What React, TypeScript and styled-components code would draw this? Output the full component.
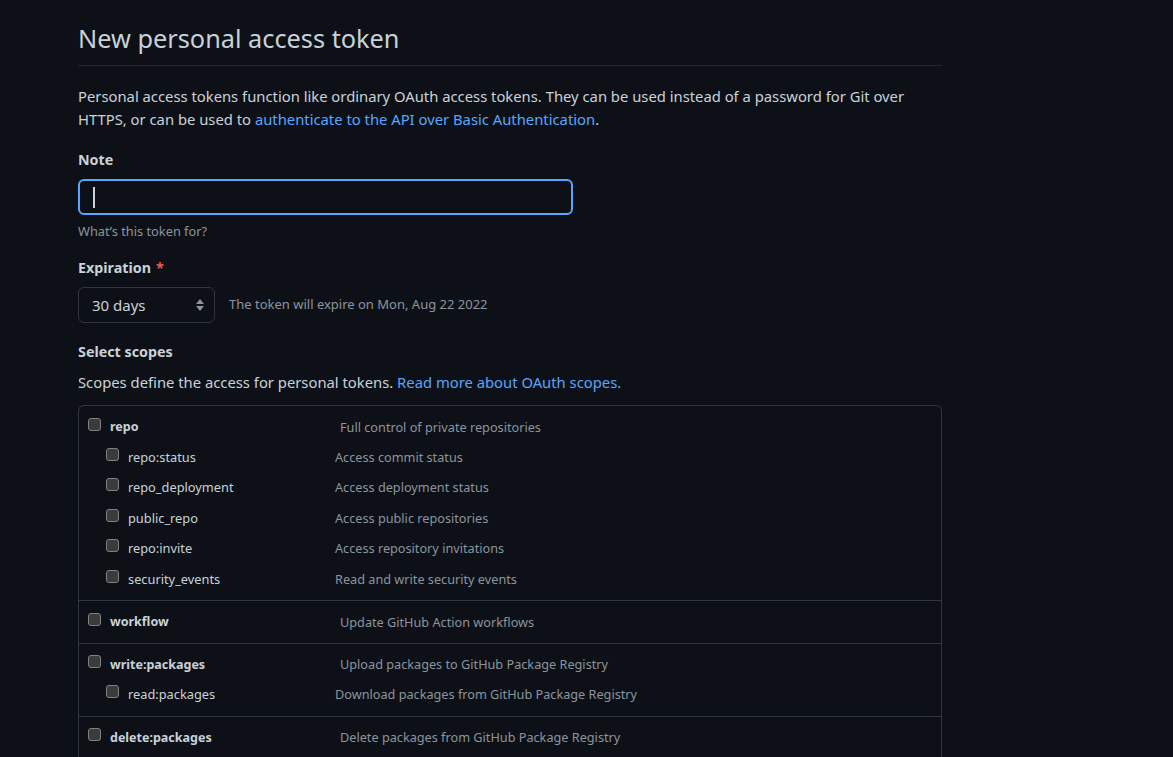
import React from "react";
import styled, { createGlobalStyle } from "styled-components";

const Global = createGlobalStyle`
  html, body { margin: 0; padding: 0; background: #0d1117; }
  body { font-family: "Noto Sans", "Liberation Sans", sans-serif; color: #c9d1d9; }
`;

const Page = styled.div`
  width: 864px;
  padding: 0 0 0 78px;
`;

const Header = styled.div`
  border-bottom: 1px solid #21262d;
  padding-top: 20px;
  padding-bottom: 9px;
`;

const Title = styled.h1`
  margin: 0;
  font-size: 25.3px;
  font-weight: 400;
  line-height: 36px;
  color: #c9d1d9;
`;

const Intro = styled.div`
  margin: 19px 0 0;
  font-size: 14.8px;
  line-height: 23px;
`;

const Line = styled.div`
  white-space: nowrap;
`;

const Link = styled.a`
  color: #58a6ff;
  text-decoration: none;
`;

const Label = styled.div<{ $top: number }>`
  margin-top: ${(p) => p.$top}px;
  font-size: 14.3px;
  font-weight: 700;
  line-height: 20px;
  color: #c9d1d9;
`;

const Req = styled.span`
  color: #f85149;
  margin-left: 5px;
`;

const Input = styled.div`
  margin-top: 9px;
  box-sizing: border-box;
  width: 495px;
  height: 36px;
  border: 2px solid #58a6ff;
  border-radius: 6px;
  display: flex;
  align-items: center;
  padding-left: 13px;
`;

const Caret = styled.span`
  display: block;
  width: 2px;
  height: 21px;
  background: #c9d1d9;
`;

const Hint = styled.div`
  margin-top: 7px;
  font-size: 12.8px;
  line-height: 18px;
  color: #8b949e;
`;

const ExpRow = styled.div`
  margin-top: 9px;
  display: flex;
  align-items: center;
  gap: 14px;
`;

const Select = styled.div`
  box-sizing: border-box;
  width: 137px;
  height: 36px;
  border: 1px solid #30363d;
  border-radius: 6px;
  display: flex;
  align-items: center;
  justify-content: space-between;
  padding: 0 9px 0 13px;
  font-size: 15px;
  color: #c9d1d9;
`;

const Muted = styled.span`
  font-size: 13px;
  color: #8b949e;
  margin-top: -2px;
`;

const Desc = styled.p`
  margin: 10px 0 0;
  font-size: 14.8px;
  line-height: 20px;
`;

const Table = styled.div`
  margin-top: 13px;
  border: 1px solid #30363d;
  border-radius: 6px;
  border-bottom: none;
  border-bottom-left-radius: 0;
  border-bottom-right-radius: 0;
`;

const Group = styled.div`
  border-bottom: 1px solid #30363d;
  padding: 6px 0 6px 9px;
  &:last-child { border-bottom: none; }
`;

const Row = styled.div<{ $sub?: boolean }>`
  display: flex;
  align-items: center;
  height: ${(p) => (p.$sub ? "30.5px" : "29.5px")};
  padding-left: ${(p) => (p.$sub ? "18px" : "0")};
`;

const Box = styled.span`
  box-sizing: border-box;
  width: 13px;
  height: 13px;
  border: 1px solid #808080;
  background: #3b3b3b;
  border-radius: 3px;
  margin-top: -5px;
  flex: none;
`;

const Name = styled.span<{ $sub?: boolean }>`
  width: ${(p) => (p.$sub ? "207px" : "230px")};
  padding-left: 9px;
  font-size: ${(p) => (p.$sub ? "12.8px" : "12.5px")};
  font-weight: ${(p) => (p.$sub ? 400 : 700)};
  color: #c9d1d9;
`;

const ScopeDesc = styled.span`
  font-size: 12.7px;
  color: #8b949e;
`;

function Arrows() {
  return (
    <svg width="10" height="14" viewBox="0 0 10 14">
      <path d="M5 1 L9 6 L1 6 Z" fill="#8b949e" />
      <path d="M1 8 L9 8 L5 13 Z" fill="#8b949e" />
    </svg>
  );
}

type Scope = { name: string; desc: string };
const groups: { main: Scope; subs: Scope[] }[] = [
  {
    main: { name: "repo", desc: "Full control of private repositories" },
    subs: [
      { name: "repo:status", desc: "Access commit status" },
      { name: "repo_deployment", desc: "Access deployment status" },
      { name: "public_repo", desc: "Access public repositories" },
      { name: "repo:invite", desc: "Access repository invitations" },
      { name: "security_events", desc: "Read and write security events" },
    ],
  },
  { main: { name: "workflow", desc: "Update GitHub Action workflows" }, subs: [] },
  {
    main: { name: "write:packages", desc: "Upload packages to GitHub Package Registry" },
    subs: [{ name: "read:packages", desc: "Download packages from GitHub Package Registry" }],
  },
  { main: { name: "delete:packages", desc: "Delete packages from GitHub Package Registry" }, subs: [] },
];

export default function App() {
  return (
    <Page>
      <Global />
      <Header>
        <Title>New personal access token</Title>
      </Header>
      <Intro>
        <Line>
          Personal access tokens function like ordinary OAuth access tokens. They can be used instead of a password for Git over
        </Line>
        <Line>
          HTTPS, or can be used to <Link>authenticate to the API over Basic Authentication</Link>.
        </Line>
      </Intro>
      <Label $top={19}>Note</Label>
      <Input>
        <Caret />
      </Input>
      <Hint>What’s this token for?</Hint>
      <Label $top={18}>
        Expiration<Req>*</Req>
      </Label>
      <ExpRow>
        <Select>
          <span>30 days</span>
          <Arrows />
        </Select>
        <Muted>The token will expire on Mon, Aug 22 2022</Muted>
      </ExpRow>
      <Label $top={19}>Select scopes</Label>
      <Desc>
        Scopes define the access for personal tokens. <Link>Read more about OAuth scopes.</Link>
      </Desc>
      <Table>
        {groups.map((g) => (
          <Group key={g.main.name}>
            <Row>
              <Box />
              <Name>{g.main.name}</Name>
              <ScopeDesc>{g.main.desc}</ScopeDesc>
            </Row>
            {g.subs.map((s) => (
              <Row $sub key={s.name}>
                <Box />
                <Name $sub>{s.name}</Name>
                <ScopeDesc>{s.desc}</ScopeDesc>
              </Row>
            ))}
          </Group>
        ))}
      </Table>
    </Page>
  );
}
